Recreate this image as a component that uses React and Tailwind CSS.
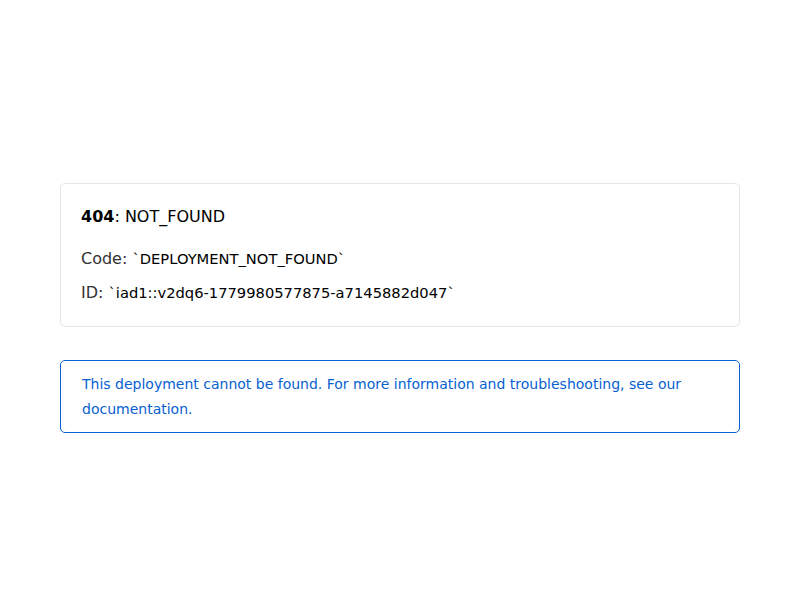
export default function App() {
  return (
    <div
      className="w-[800px] h-[600px] bg-white flex flex-col items-center pt-[183px] text-black"
      style={{ fontFamily: '"DejaVu Sans", sans-serif' }}
    >
      <div className="w-[680px]">
        <div className="border border-[#e5e5e5] rounded-[5px] px-[20px] pt-[21px] pb-[21px]">
          <div className="text-[16px] leading-[24px]">
            <span className="font-bold">404</span>: NOT_FOUND
          </div>
          <div className="mt-[18px] text-[16px] leading-[24px] text-[#333]">
            Code: <span className="text-[14.7px] text-black">`DEPLOYMENT_NOT_FOUND`</span>
          </div>
          <div className="mt-[10px] text-[16px] leading-[24px] text-[#333]">
            ID: <span className="text-[14.7px] text-black">`iad1::v2dq6-1779980577875-a7145882d047`</span>
          </div>
        </div>
        <div className="mt-[33px] border border-[#0761d1] rounded-[5px] px-[21px] pt-[11px] pb-[10px] text-[14px] leading-[25px] text-[#0761d1]">
          This deployment cannot be found. For more information and troubleshooting, see our documentation.
        </div>
      </div>
    </div>
  );
}
